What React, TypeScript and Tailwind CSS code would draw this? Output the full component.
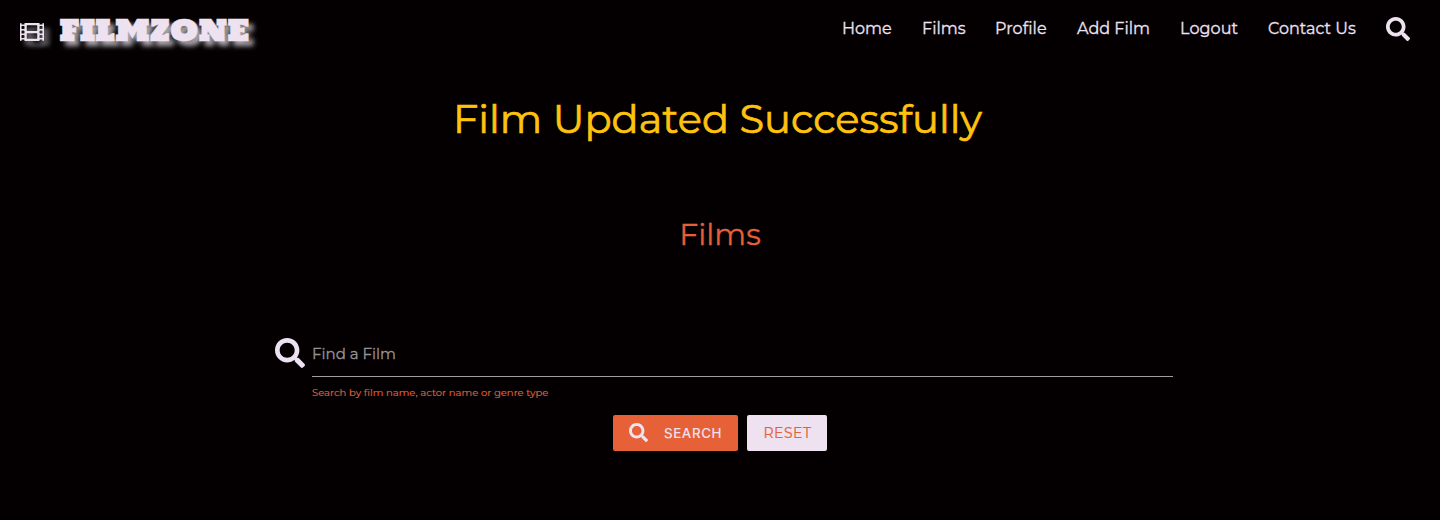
import { FaFilm, FaSearch } from "react-icons/fa";

const links = [
  { label: "Home", style: "w-[50px]" },
  { label: "Films", style: "w-[43px]" },
  { label: "Profile", style: "w-[52px] tracking-[0.1px]" },
  { label: "Add Film", style: "w-[73px]" },
  { label: "Logout", style: "w-[58px] tracking-[0.1px]" },
  { label: "Contact Us", style: "w-[88px]" },
];

export default function App() {
  return (
    <div className="h-[520px] overflow-hidden bg-[#040002] font-['Montserrat','Inter',sans-serif] text-[#eee2f1]">
      <header className="flex h-16 items-start justify-between pl-5 pr-[30px]">
        <a href="#" className="flex">
          <FaFilm className="mt-5 size-6 drop-shadow-[5px_5px_2px_#858085]" />
          <span className="ml-[15.5px] mt-0.5 whitespace-nowrap font-['Holtwood_One_SC','DejaVu_Serif',serif] text-[30px] leading-[56px] [-webkit-text-stroke:0.4px_#eee2f1] [text-shadow:5px_5px_5px_#aaa5aa]">
            FILMZONE
          </span>
        </a>
        <nav className="flex gap-[30px] pt-4">
          {links.map((link) => (
            <a key={link.label} href="#" className={`mt-px whitespace-nowrap text-[16px] leading-6 [-webkit-text-stroke:0.3px_#eee2f1] ${link.style}`}>
              {link.label}
            </a>
          ))}
          <a href="#" aria-label="Search" className="mt-px"><FaSearch className="size-6" /></a>
        </nav>
      </header>
      <main className="flex flex-col items-center">
        <h1 className="mr-[5px] mt-[31px] whitespace-nowrap text-[40px] leading-[48px] text-[#ffc20e] [-webkit-text-stroke:0.7px_#ffc20e]">Film Updated Successfully</h1>
        <h2 className="mt-[72px] whitespace-nowrap text-[30px] leading-10 text-[#e66038] [-webkit-text-stroke:0.3px_#e66038]">Films</h2>
        <form className="mt-[76px] w-[898px] pl-1">
          <div className="flex">
            <FaSearch className="mt-[7px] size-[30px] shrink-0" />
            <div className="ml-[7px] w-[861px] shrink-0">
              <input aria-label="Find a Film" placeholder="Find a Film" className="block h-[46px] w-full border-b border-[#9e9e9e] bg-transparent text-[15px] outline-none placeholder:text-[#959294] placeholder:opacity-100 placeholder:[-webkit-text-stroke:0.3px_#959294]" />
              <p className="mt-2 whitespace-nowrap text-[10px] leading-4 tracking-[0.035px] text-[#e66038] [-webkit-text-stroke:0.15px_#e66038]">Search by film name, actor name or genre type</p>
            </div>
          </div>
          <div className="ml-[338px] mt-[14px] flex gap-[9px]">
            <button type="button" className="flex h-9 w-[125px] items-center rounded-[2px] bg-[#e66038] pl-4 text-[14px]">
              <FaSearch className="-mt-px size-[19px]" /><span className="ml-4 mt-px font-['Inter'] text-[13.33px] font-medium tracking-[0.6px]">SEARCH</span>
            </button>
            <button type="button" className="h-9 w-20 rounded-[2px] bg-[#eee2f1] pl-px text-[14px] tracking-[0.5px] text-[#e66038] [-webkit-text-stroke:0.2px_#e66038]">RESET</button>
          </div>
        </form>
      </main>
    </div>
  );
}
